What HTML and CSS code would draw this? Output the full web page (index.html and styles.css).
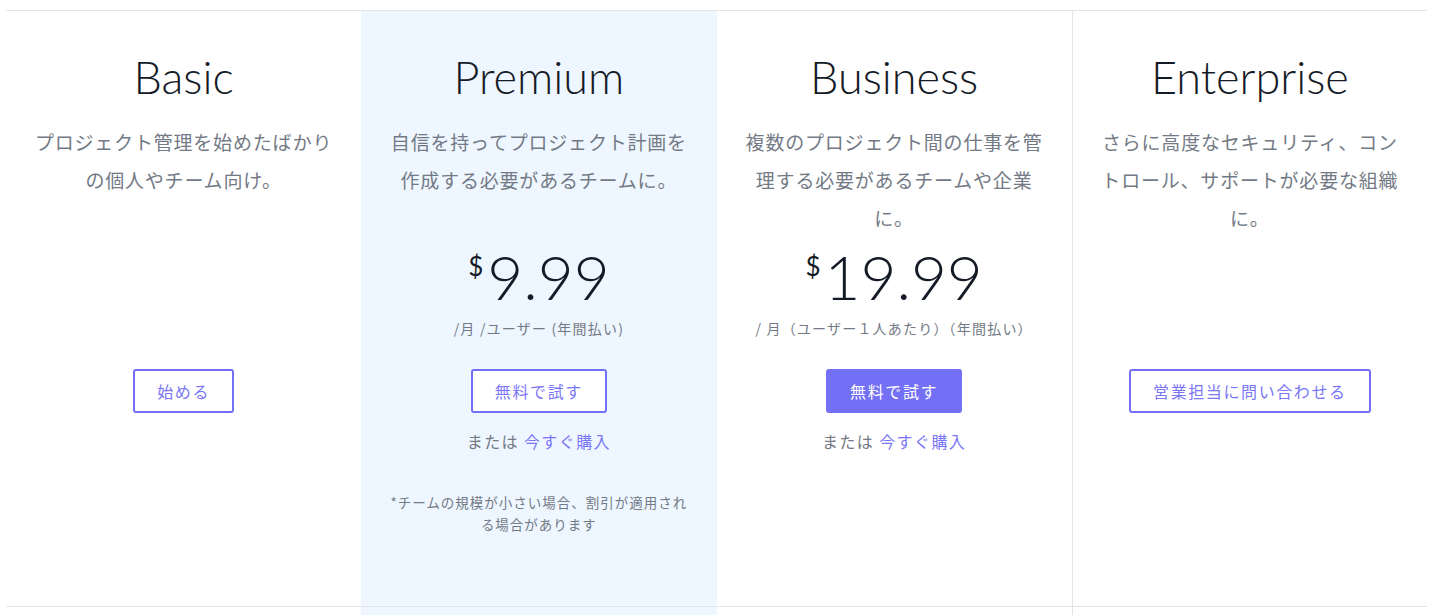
FILE: index.html
```html
<!DOCTYPE html>
<html lang="ja">
<head>
<meta charset="utf-8">
<title>料金プラン</title>
<link rel="stylesheet" href="styles.css">
</head>
<body>
<section class="pricing">
  <div class="plans">
    <div class="plan">
      <h2 class="plan-title">Basic</h2>
      <p class="plan-desc">プロジェクト管理を始めたばかりの個人やチーム向け。</p>
      <div class="price-area"></div>
      <a class="btn btn-outline" href="#">始める</a>
    </div>
    <div class="plan plan-featured">
      <h2 class="plan-title">Premium</h2>
      <p class="plan-desc">自信を持ってプロジェクト計画を作成する必要があるチームに。</p>
      <div class="price-area">
        <div class="price"><span class="currency">$</span><span class="amount">9.99</span></div>
        <p class="period">/月 /ユーザー (年間払い)</p>
      </div>
      <a class="btn btn-outline" href="#">無料で試す</a>
      <p class="alt">または <a class="alt-link" href="#">今すぐ購入</a></p>
      <p class="note">*チームの規模が小さい場合、割引が適用される場合があります</p>
    </div>
    <div class="plan">
      <h2 class="plan-title">Business</h2>
      <p class="plan-desc">複数のプロジェクト間の仕事を管理する必要があるチームや企業に。</p>
      <div class="price-area">
        <div class="price"><span class="currency">$</span><span class="amount">19.99</span></div>
        <p class="period">/ 月（ユーザー１人あたり）（年間払い）</p>
      </div>
      <a class="btn btn-solid" href="#">無料で試す</a>
      <p class="alt">または <a class="alt-link" href="#">今すぐ購入</a></p>
    </div>
    <div class="plan plan-divided">
      <h2 class="plan-title">Enterprise</h2>
      <p class="plan-desc">さらに高度なセキュリティ、コントロール、サポートが必要な組織に。</p>
      <div class="price-area"></div>
      <a class="btn btn-outline" href="#">営業担当に問い合わせる</a>
    </div>
  </div>
  <div class="plans plans-next">
    <div class="cell"></div>
    <div class="cell plan-featured"></div>
    <div class="cell"></div>
    <div class="cell plan-divided"></div>
  </div>
</section>
</body>
</html>
```

FILE: styles.css
```css
* {
  box-sizing: border-box;
}

html, body {
  margin: 0;
  padding: 0;
  background: #ffffff;
  overflow: hidden;
}

body {
  font-family: Lato, "Noto Sans CJK JP", sans-serif;
  color: #151b26;
}

.pricing {
  margin: 10px 13px 0 6px;
  border-top: 1px solid #e2e6e9;
}

.plans {
  display: grid;
  grid-template-columns: repeat(4, minmax(0, 1fr));
  min-height: 595px;
}

.plans-next {
  min-height: 20px;
  border-top: 1px solid #e2e6e9;
}

.plan {
  display: flex;
  flex-direction: column;
  align-items: center;
  padding: 41px 22px 0;
  text-align: center;
}

.plan-featured {
  background: #eef6ff;
}

.plan-divided {
  border-left: 1px solid #e2e6e9;
}

.plan-title {
  margin: 0;
  font-family: Lato, sans-serif;
  font-weight: 300;
  font-size: 45px;
  line-height: 50px;
  color: #151b26;
}

.plan-desc {
  margin: 21px 0 0;
  width: 100%;
  min-height: 114px;
  font-family: "Noto Sans CJK JP", sans-serif;
  font-size: 19px;
  letter-spacing: 0.8px;
  line-height: 38px;
  color: #737a85;
}

.price-area {
  display: flex;
  flex-direction: column;
  align-items: center;
  height: 132px;
  padding-top: 4px;
}

.price {
  display: flex;
  align-items: flex-start;
  justify-content: center;
}

.currency {
  font-family: Lato, sans-serif;
  font-weight: 400;
  font-size: 26px;
  line-height: 30px;
  margin-top: 10px;
  margin-right: 4px;
  color: #151b26;
}

.amount {
  font-family: Lato, sans-serif;
  font-weight: 300;
  font-size: 62px;
  line-height: 70px;
  color: #151b26;
}

.period {
  margin: 7px 0 0;
  font-family: "Noto Sans CJK JP", sans-serif;
  font-size: 14px;
  line-height: 20px;
  letter-spacing: 1.2px;
  color: #737a85;
}

.btn {
  display: inline-block;
  padding: 10px 22px;
  border: 2px solid #7470f5;
  border-radius: 3px;
  font-family: "Noto Sans CJK JP", sans-serif;
  font-size: 16px;
  line-height: 20px;
  letter-spacing: 1.6px;
  text-decoration: none;
}

.btn-outline {
  color: #7a76f6;
  background: #ffffff;
}

.btn-solid {
  color: #ffffff;
  background: #7470f5;
}

.alt {
  margin: 16px 0 0;
  font-family: "Noto Sans CJK JP", sans-serif;
  font-size: 16px;
  line-height: 24px;
  letter-spacing: 1.4px;
  color: #737a85;
}

.alt-link {
  color: #7a76f6;
  text-decoration: none;
}

.note {
  flex: none;
  margin: 38px 0 0;
  width: 306px;
  font-family: "Noto Sans CJK JP", sans-serif;
  font-size: 13.5px;
  line-height: 22px;
  letter-spacing: 1px;
  color: #737a85;
}
```
